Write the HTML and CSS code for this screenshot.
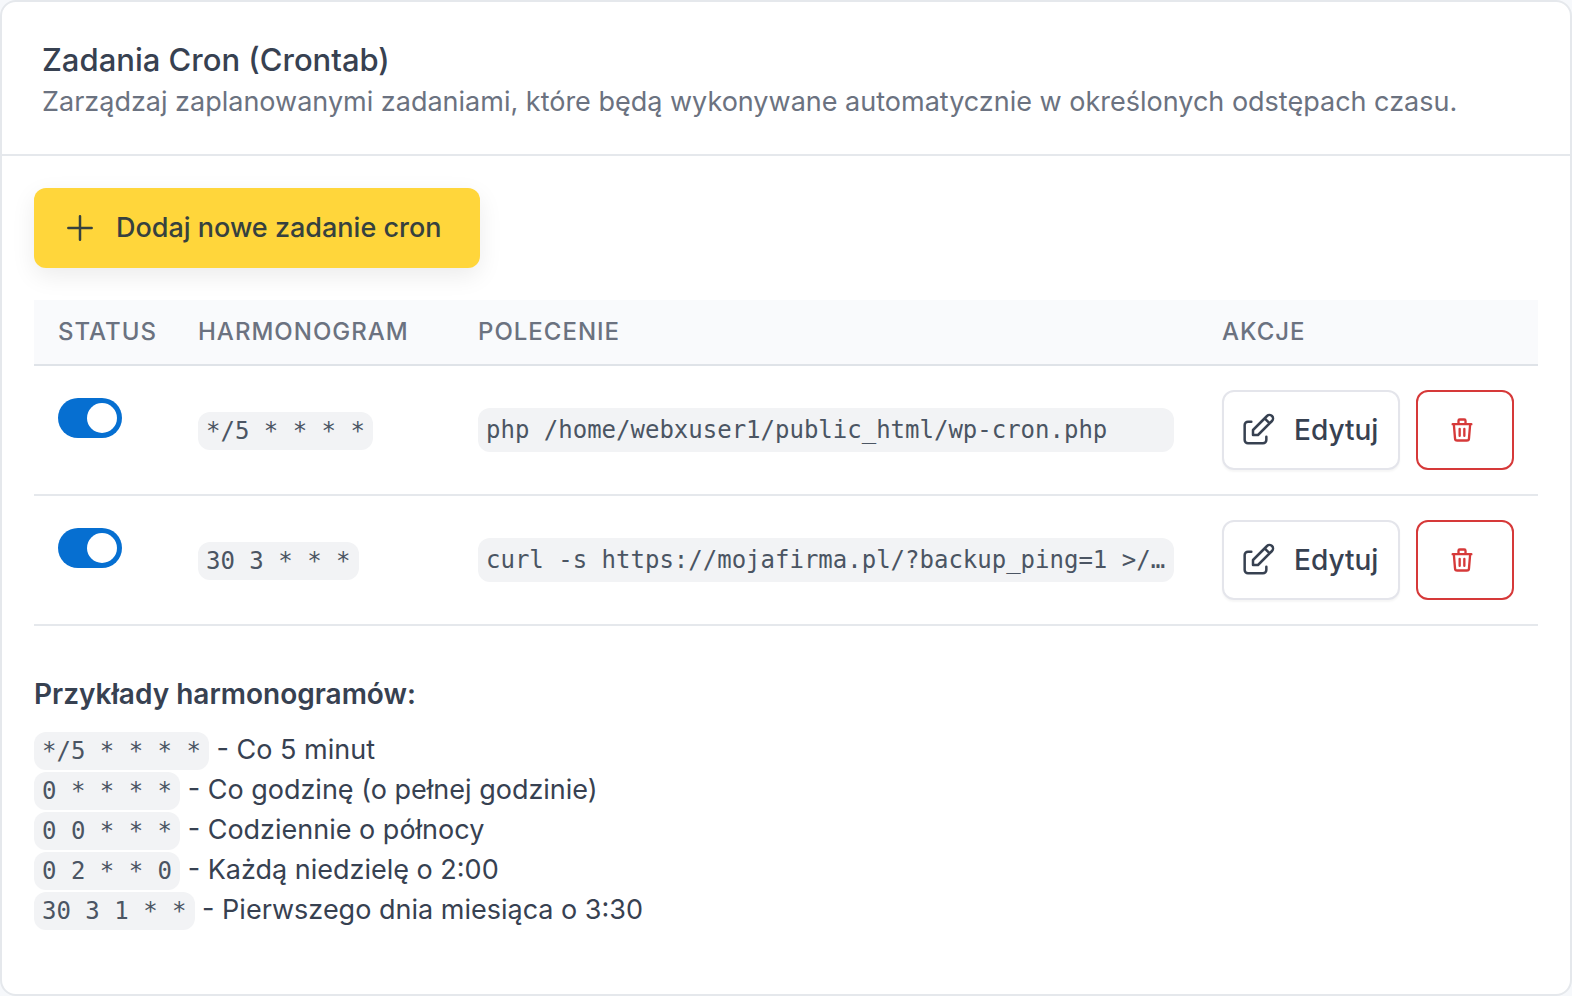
FILE: index.html
```html
<!DOCTYPE html>
<html lang="pl">
<head>
<meta charset="utf-8">
<meta name="viewport" content="width=device-width, initial-scale=1">
<title>Zadania Cron (Crontab)</title>
<link rel="stylesheet" href="styles.css">
</head>
<body>
<svg class="sprite" aria-hidden="true">
  <symbol id="plus" viewBox="0 0 24 24"><path d="M12 5v14M5 12h14"/></symbol>
  <symbol id="edit" viewBox="0 0 24 24"><path d="M8 7H6a2 2 0 0 0-2 2v9a2 2 0 0 0 2 2h9a2 2 0 0 0 2-2v-2"/><path d="M20.4 6.6a2.1 2.1 0 0 0-3-3L9 12v3h3l8.4-8.4zM16 5l3 3"/></symbol>
  <symbol id="trash" viewBox="0 0 24 24"><path d="M4 7h16M10 11v6M14 11v6M5 7l1 12a2 2 0 0 0 2 2h8a2 2 0 0 0 2-2l1-12M9 7V4a1 1 0 0 1 1-1h4a1 1 0 0 1 1 1v3"/></symbol>
</svg>
<main class="card">
  <header class="card-header">
    <h1 class="card-title">Zadania Cron (Crontab)</h1>
    <p class="card-subtitle">Zarządzaj zaplanowanymi zadaniami, które będą wykonywane automatycznie w określonych odstępach czasu.</p>
  </header>
  <div class="card-body">
    <button type="button" class="btn btn-primary"><svg class="icon" aria-hidden="true"><use href="#plus"/></svg>Dodaj nowe zadanie cron</button>
    <table class="table">
      <colgroup><col class="col-status"><col class="col-schedule"><col><col class="col-actions"></colgroup>
      <thead>
        <tr><th scope="col">Status</th><th scope="col">Harmonogram</th><th scope="col">Polecenie</th><th scope="col">Akcje</th></tr>
      </thead>
      <tbody>
        <tr>
          <td class="cell-top"><input type="checkbox" class="switch" aria-label="Zadanie aktywne" checked></td>
          <td><code>*/5 * * * *</code></td>
          <td><code class="command">php /home/webxuser1/public_html/wp-cron.php</code></td>
          <td><div class="actions">
            <button type="button" class="btn btn-edit"><svg class="icon" aria-hidden="true"><use href="#edit"/></svg>Edytuj</button>
            <button type="button" class="btn btn-delete" aria-label="Usuń"><svg class="icon icon-small" aria-hidden="true"><use href="#trash"/></svg></button>
          </div></td>
        </tr>
        <tr>
          <td class="cell-top"><input type="checkbox" class="switch" aria-label="Zadanie aktywne" checked></td>
          <td><code>30 3 * * *</code></td>
          <td><code class="command">curl -s https://mojafirma.pl/?backup_ping=1 &gt;/…</code></td>
          <td><div class="actions">
            <button type="button" class="btn btn-edit"><svg class="icon" aria-hidden="true"><use href="#edit"/></svg>Edytuj</button>
            <button type="button" class="btn btn-delete" aria-label="Usuń"><svg class="icon icon-small" aria-hidden="true"><use href="#trash"/></svg></button>
          </div></td>
        </tr>
      </tbody>
    </table>
    <section class="examples">
      <h2 class="examples-title">Przykłady harmonogramów:</h2>
      <ul class="examples-list">
        <li><code>*/5 * * * *</code> - Co 5 minut</li>
        <li><code>0 * * * *</code> - Co godzinę (o pełnej godzinie)</li>
        <li><code>0 0 * * *</code> - Codziennie o północy</li>
        <li><code>0 2 * * 0</code> - Każdą niedzielę o 2:00</li>
        <li><code>30 3 1 * *</code> - Pierwszego dnia miesiąca o 3:30</li>
      </ul>
    </section>
  </div>
</main>
</body>
</html>
```
FILE: styles.css
```css
* { box-sizing: border-box; }

body {
  margin: 0;
  background: #f6f8fb;
  color: #374151;
  font: 400 27px/40px Inter, "Liberation Sans", sans-serif;
}

.sprite { display: none; }

.card {
  min-height: 100vh;
  background: #fff;
  border: 2px solid #e5e8ec;
  border-radius: 16px;
}

.card-header {
  padding: 36px 40px 32px;
  border-bottom: 2px solid #e5e8ec;
}

.card-title {
  margin: 0;
  font-size: 31px;
  line-height: 44px;
  font-weight: 500;
}

.card-subtitle { margin: 0; color: #6b7280; }

.card-body { padding: 32px 32px 64px; }

.btn {
  display: inline-flex;
  align-items: center;
  gap: 16px;
  height: 80px;
  border: 2px solid transparent;
  border-radius: 12px;
  background: #fff;
  color: #374151;
  font: inherit;
  font-weight: 500;
  white-space: nowrap;
  cursor: pointer;
}

.btn-primary {
  display: flex;
  padding: 0 36px 0 24px;
  background: #ffd63b;
  color: #36413f;
  box-shadow: 0 8px 24px rgba(0, 0, 0, 0.08);
}

.btn-edit {
  padding: 0 20px 0 14px;
  border-color: #e4e5eb;
  font-size: 28px;
  box-shadow: 0 2px 2px rgba(0, 0, 0, 0.04);
}

.btn-delete {
  width: 98px;
  padding: 0 36px 0 30px;
  border-color: #d63939;
  color: #d63939;
}

.icon {
  flex: none;
  width: 40px;
  height: 40px;
  fill: none;
  stroke: currentColor;
  stroke-width: 1.5;
  stroke-linecap: round;
  stroke-linejoin: round;
}

.icon-small { width: 28px; height: 28px; stroke-width: 2; }

.table {
  width: 100%;
  margin: 32px 0 48px;
  border-collapse: separate;
  border-spacing: 0;
  table-layout: fixed;
}

.col-status { width: 140px; }
.col-schedule { width: 280px; }
.col-actions { width: 340px; }

.table th {
  padding: 16px 24px;
  background: #f9fafc;
  border-bottom: 2px solid #dfe3e8;
  color: #6b7280;
  font-size: 24px;
  line-height: 32px;
  font-weight: 500;
  letter-spacing: 1px;
  text-align: left;
  text-transform: uppercase;
}

.table td {
  padding: 24px;
  border-bottom: 2px solid #e5e8ec;
  vertical-align: middle;
}

.table .cell-top { vertical-align: top; }

.switch {
  display: flex;
  align-items: center;
  justify-content: flex-end;
  appearance: none;
  width: 64px;
  height: 40px;
  margin: 8px 0 0;
  padding: 5px;
  border-radius: 20px;
  background: #cbd5e1;
  cursor: pointer;
}

.switch:checked { background: #066fd1; }

.switch::before {
  content: "";
  width: 30px;
  height: 30px;
  border-radius: 50%;
  background: #fff;
}

code {
  padding: 5px 8px;
  border-radius: 12px;
  background: #f2f3f5;
  color: #4b5563;
  font: 24px "DejaVu Sans Mono", monospace;
}

.command {
  display: block;
  padding: 6px 8px;
  line-height: 32px;
  overflow: hidden;
  text-overflow: ellipsis;
  white-space: nowrap;
}

.actions { display: flex; gap: 16px; }

.examples-title {
  margin: 0 0 16px;
  font-size: 28px;
  line-height: 40px;
  font-weight: 600;
}

.examples-list { margin: 0; padding: 0; list-style: none; }
```
